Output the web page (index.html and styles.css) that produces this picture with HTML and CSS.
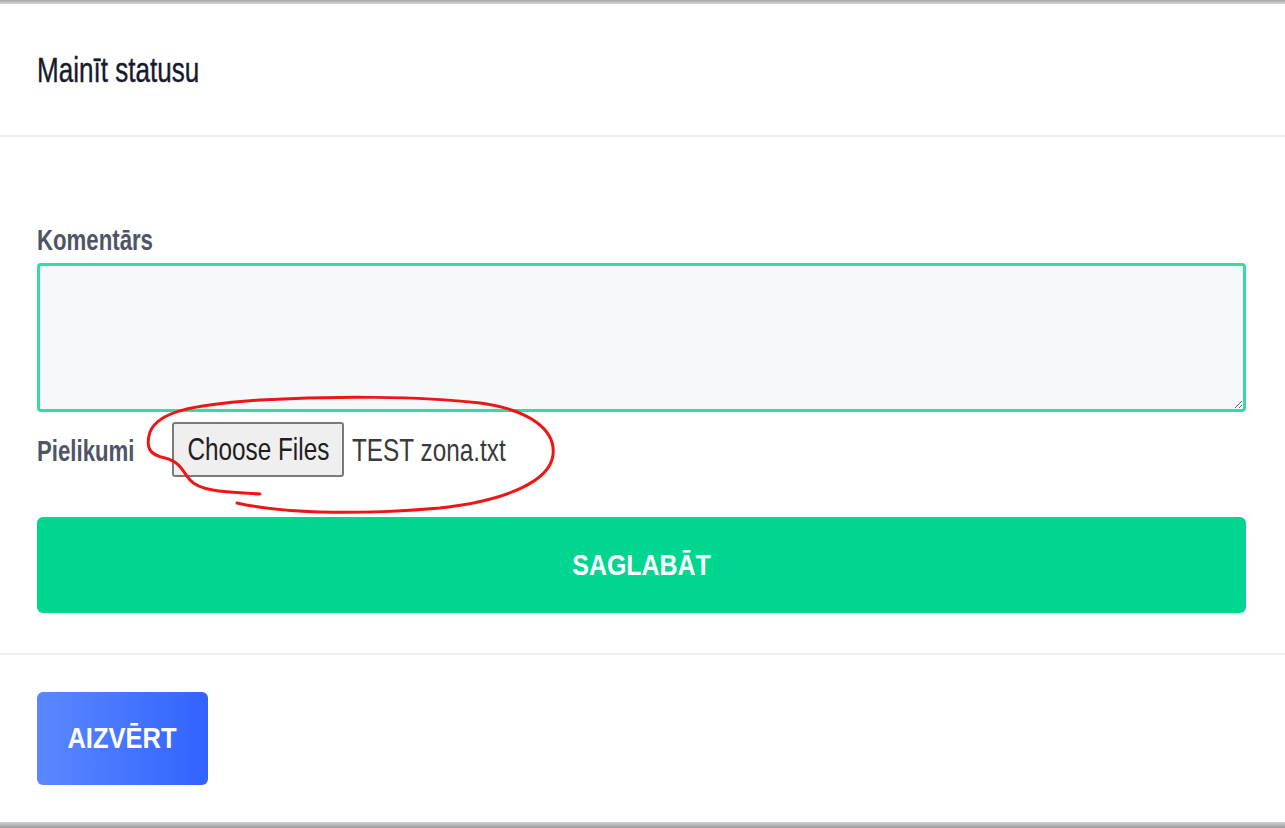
FILE: index.html
```html
<!DOCTYPE html>
<html lang="lv">
<head>
<meta charset="utf-8">
<title>Mainīt statusu</title>
<link rel="stylesheet" href="styles.css">
</head>
<body>
<div class="modal">
  <div class="topbar"></div>
  <div class="header"><h1 class="title"><span class="nt">Mainīt statusu</span></h1></div>
  <div class="body">
    <label class="label label-comment" for="c"><span class="nt">Komentārs</span></label>
    <textarea id="c" class="comment"></textarea>
    <div class="file-row">
      <span class="label label-file"><span class="nt">Pielikumi</span></span>
      <span class="file-btn"><span class="nt nc">Choose Files</span></span>
      <span class="file-name"><span class="nt">TEST zona.txt</span></span>
    </div>
    <button class="save"><span class="nt nc">SAGLABĀT</span></button>
  </div>
  <div class="footer">
    <button class="close"><span class="nt nc">AIZVĒRT</span></button>
  </div>
  <div class="bottombar"></div>
  <svg class="mark" width="1285" height="828" viewBox="0 0 1285 828">
    <path d="M 260 494 C 230 492, 200 492, 190 480 C 182 470, 180 462, 165 458 C 150 455, 145 448, 150 432 C 158 412, 190 405, 260 400 C 330 396, 420 396, 480 403 C 530 410, 556 430, 553 455 C 550 480, 510 500, 440 508 C 370 514, 290 515, 237 503" fill="none" stroke="#f01515" stroke-width="3" stroke-linecap="round"/>
  </svg>
</div>
</body>
</html>
```

FILE: styles.css
```css
* { box-sizing: border-box; }
html, body { margin: 0; padding: 0; background: #fff; }
body {
  font-family: "Liberation Sans", Arial, sans-serif;
  width: 1285px;
  height: 828px;
  overflow: hidden;
}
.modal {
  position: relative;
  width: 1285px;
  height: 828px;
  display: flex;
  flex-direction: column;
}
/* condensed text look of the reference */
.nt {
  display: inline-block;
  white-space: nowrap;
  transform: scaleX(0.75);
  transform-origin: left center;
}
.nc { transform-origin: center center; }
.topbar {
  height: 4px;
  background: linear-gradient(#a4a4a6, #d8d8da);
}
.header {
  height: 133px;
  display: flex;
  align-items: center;
  padding-left: 37px;
  border-bottom: 2px solid #edf0f4;
}
.title {
  margin: 0;
  font-size: 35px;
  font-weight: normal;
  color: #161b2b;
  line-height: 36px;
  -webkit-text-stroke: 0.4px #161b2b;
}
.title .nt { transform: scaleX(0.745); }
.body {
  padding: 87px 39px 40px 37px;
  display: flex;
  flex-direction: column;
  border-bottom: 2px solid #edf0f4;
}
.label {
  font-size: 30px;
  line-height: 31px;
  font-weight: bold;
  color: #4e5566;
}
.label .nt { transform: scaleX(0.74); }
.label-comment { margin-bottom: 8px; }
.comment {
  display: block;
  width: 100%;
  height: 149px;
  border: 3px solid #34dd9f;
  border-radius: 4px;
  background: #f7f8fb;
  resize: vertical;
  outline: none;
}
.file-row {
  margin-top: 11px;
  height: 55px;
  display: flex;
  align-items: center;
}
.label-file {
  width: 98px;
  flex-shrink: 0;
}
.file-btn {
  height: 55px;
  width: 172px;
  flex-shrink: 0;
  display: flex;
  align-items: center;
  justify-content: center;
  border: 2px solid #7a7a7a;
  border-radius: 3px;
  background: #efefef;
  font-size: 32px;
  color: #1e1e1e;
  margin-top: -2px;
  margin-left: 37px;
}
.file-btn .nt { transform: scaleX(0.76); }
.file-name {
  margin-left: 8px;
  font-size: 32px;
  color: #3a3a3a;
}
.file-name .nt { transform: scaleX(0.76); }
.save {
  margin-top: 39px;
  height: 96px;
  width: 100%;
  border: none;
  border-radius: 6px;
  background: #00d68f;
  color: #fff;
  font-family: inherit;
  font-size: 29px;
  font-weight: bold;
}
.save .nt { transform: scaleX(0.86); }
.footer {
  flex: 1;
  padding: 37px 0 0 37px;
}
.close {
  width: 171px;
  height: 93px;
  padding: 0;
  border: none;
  border-radius: 6px;
  background: linear-gradient(90deg, #5b88ff, #3163ff);
  color: #fff;
  font-family: inherit;
  font-size: 29px;
  font-weight: bold;
}
.close .nt { transform: scaleX(0.88); }
.bottombar {
  height: 6px;
  background: linear-gradient(#d0d0d2, #9c9c9e);
}
.mark {
  position: absolute;
  left: 0;
  top: 0;
  pointer-events: none;
}
```
